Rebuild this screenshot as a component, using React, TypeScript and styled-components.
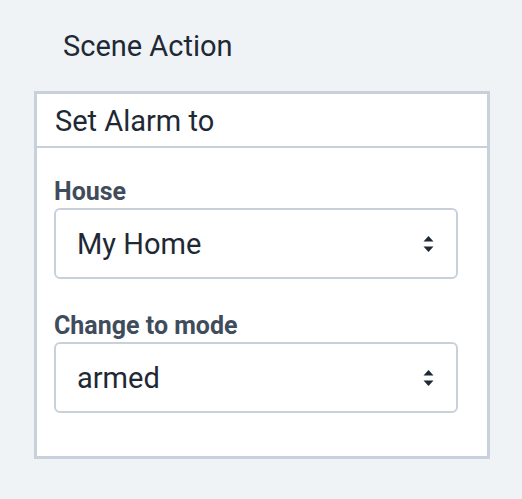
import React from "react";
import styled, { createGlobalStyle } from "styled-components";

const Global = createGlobalStyle`
  html, body { margin: 0; padding: 0; background: #eff3f6; }
  body { font-family: Roboto, "Liberation Sans", sans-serif; color: #1e2935; }
  * { box-sizing: border-box; }
`;

const Page = styled.div`
  width: 522px;
  height: 499px;
  padding: 29px 0 0 34px;
  background: #eff3f6;
`;

const Title = styled.h1`
  margin: 0 0 28px 29px;
  font-size: 29px;
  line-height: 34px;
  font-weight: 400;
  color: #1e2935;
`;

const Card = styled.section`
  width: 456px;
  background: #ffffff;
  border: 3px solid #c8d1db;
`;

const CardHeader = styled.div`
  padding: 10px 0 8px 18px;
  font-size: 29px;
  line-height: 34px;
  font-weight: 400;
  border-bottom: 2px solid #c8d1db;
`;

const CardBody = styled.div`
  display: flex;
  flex-direction: column;
  padding: 30px 0 43px 17px;
`;

const Field = styled.div<{ $gap?: number }>`
  display: flex;
  flex-direction: column;
  gap: 2px;
  margin-top: ${(p) => p.$gap ?? 0}px;
`;

const Label = styled.label`
  font-size: 25px;
  line-height: 28px;
  font-weight: 700;
  color: #3f4c5b;
`;

const Select = styled.div`
  width: 404px;
  height: 71px;
  display: flex;
  align-items: center;
  justify-content: space-between;
  padding: 0 22px 0 21px;
  border: 2px solid #c8d1db;
  border-radius: 6px;
  background: #fff;
  font-size: 29px;
  line-height: 34px;
  font-weight: 400;
  color: #1e2935;
`;

const Arrows = () => (
  <svg width="11" height="18" viewBox="0 0 11 18" aria-hidden>
    <path d="M5.5 1 L10.5 6.5 L0.5 6.5 Z" fill="#1e2935" />
    <path d="M5.5 17 L10.5 11.5 L0.5 11.5 Z" fill="#1e2935" />
  </svg>
);

const SelectBox = ({ value }: { value: string }) => (
  <Select>
    <span>{value}</span>
    <Arrows />
  </Select>
);

export default function App() {
  return (
    <Page>
      <Global />
      <Title>Scene Action</Title>
      <Card>
        <CardHeader>Set Alarm to</CardHeader>
        <CardBody>
          <Field>
            <Label>House</Label>
            <SelectBox value="My Home" />
          </Field>
          <Field $gap={33}>
            <Label>Change to mode</Label>
            <SelectBox value="armed" />
          </Field>
        </CardBody>
      </Card>
    </Page>
  );
}
